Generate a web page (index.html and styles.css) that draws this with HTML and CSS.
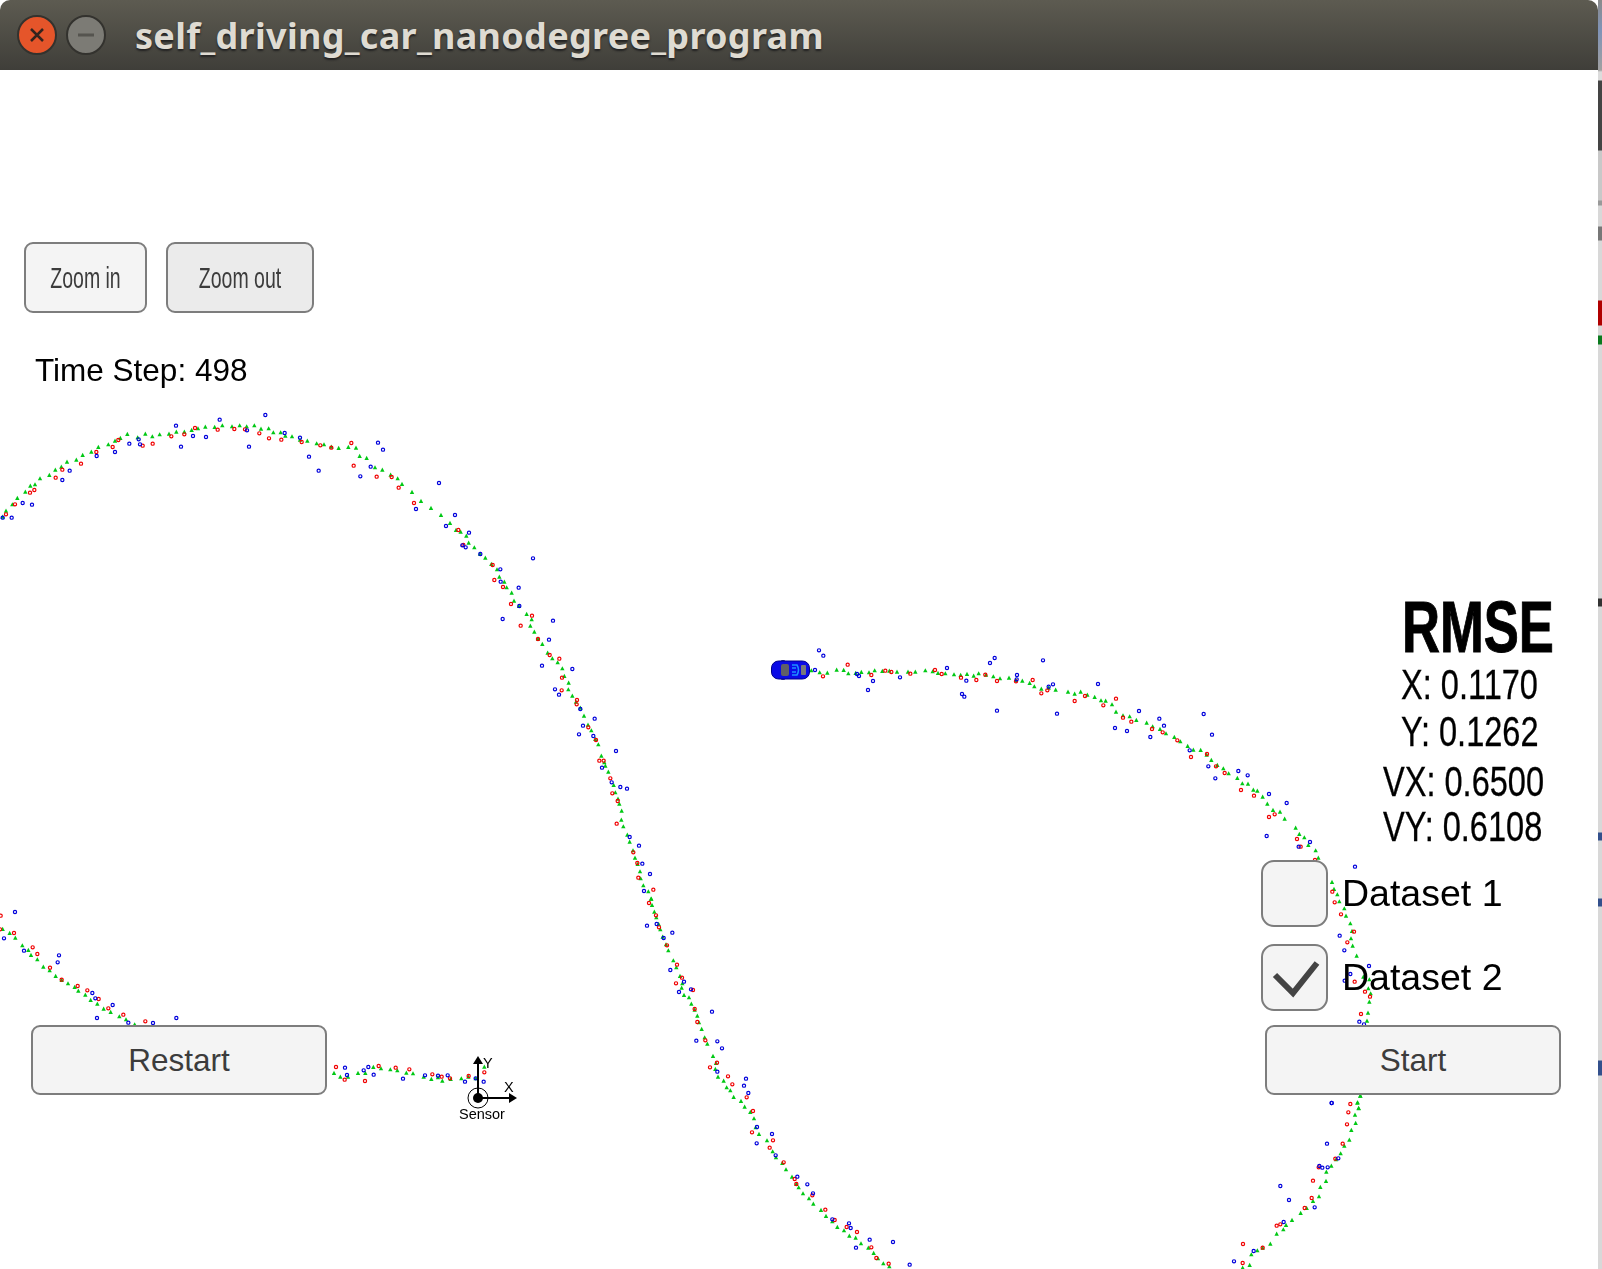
FILE: index.html
```html
<!DOCTYPE html>
<html lang="en">
<head>
    <meta charset="UTF-8">
    <title>self_driving_car_nanodegree_program</title>
    <link rel="stylesheet" href="styles.css">
</head>
<body>
    <div class="window">
        <div class="titlebar">
            <svg class="win-btn close" width="40" height="40" viewBox="0 0 40 40">
                <circle cx="20" cy="20" r="19" fill="#e5552a" stroke="#33322e" stroke-width="2"/>
                <path d="M14 14 L26 26 M26 14 L14 26" stroke="#33241e" stroke-width="2.5" fill="none"/>
            </svg>
            <svg class="win-btn" width="42" height="40" viewBox="0 0 42 40">
                <circle cx="21" cy="20" r="19" fill="#7c7b75" stroke="#33322e" stroke-width="2"/>
                <path d="M13 20 H29" stroke="#55544f" stroke-width="3" fill="none"/>
            </svg>
            <div class="title">self_driving_car_nanodegree_program</div>
        </div>

        <div class="sim">
            <canvas id="track" width="1598" height="1199"></canvas>

            <div class="zoom-controls">
                <button class="btn btn-zoom"><span>Zoom in</span></button>
                <button class="btn btn-zoom pressed"><span>Zoom out</span></button>
            </div>
            <div class="time-step">Time Step: 498</div>

            <svg class="car" width="40" height="20" viewBox="0 0 40 20">
                <rect x="10" y="0" width="4" height="20" rx="1" fill="#3a3a90"/>
                <rect x="0.5" y="1" width="38" height="18" rx="7" fill="#0a0ae6" stroke="#00008c"/>
                <rect x="10" y="4" width="8" height="12" rx="2" fill="#5f5f68"/>
                <path d="M21 5 H26 Q29 10 26 15 H21 M21 8 H25 M21 12 H25" stroke="#1e90ff" stroke-width="1.5" fill="none"/>
                <rect x="30" y="5" width="5" height="10" rx="1" fill="#77777c"/>
            </svg>

            <svg class="sensor" width="75" height="75" viewBox="0 0 75 75">
                <circle cx="27" cy="47" r="10" fill="#fff" stroke="#000" stroke-width="1"/>
                <circle cx="27" cy="47" r="5" fill="#000"/>
                <path d="M27 47 V12 M27 47 H60" stroke="#000" stroke-width="2" fill="none"/>
                <path d="M27 5 L32 13 H22 Z M66 47 L58 42 V52 Z" fill="#000"/>
                <text x="32" y="17">Y</text>
                <text x="53" y="41">X</text>
                <text x="8" y="68">Sensor</text>
            </svg>

            <div class="rmse">
                <div class="rmse-head">RMSE</div>
                <div class="rmse-row">X: 0.1170</div>
                <div class="rmse-row row-y">Y: 0.1262</div>
                <div class="rmse-row row-vx">VX: 0.6500</div>
                <div class="rmse-row row-vy">VY: 0.6108</div>
            </div>

            <div class="datasets">
                <div class="dataset">
                    <div class="checkbox"></div>
                    <span>Dataset 1</span>
                </div>
                <div class="dataset">
                    <div class="checkbox">
                        <svg width="63" height="63" viewBox="0 0 63 63">
                            <path d="M12 29 L30 47 L54 17" stroke="#444" stroke-width="6" fill="none"/>
                        </svg>
                    </div>
                    <span>Dataset 2</span>
                </div>
            </div>

            <button class="btn btn-wide restart">Restart</button>
            <button class="btn btn-wide start">Start</button>
        </div>
    </div>
    <div class="strip"></div>

    <script src="app.js"></script>
</body>
</html>
```

FILE: styles.css
```css
* {
    margin: 0;
    padding: 0;
    box-sizing: border-box;
}

body {
    width: 1602px;
    height: 1269px;
    display: flex;
    overflow: hidden;
    background: #fff;
    font-family: 'Liberation Sans', Arial, sans-serif;
    color: #000;
}

.window {
    flex: 1;
    display: flex;
    flex-direction: column;
}

.titlebar {
    height: 70px;
    display: flex;
    align-items: center;
    padding-left: 17px;
    gap: 8px;
    background: linear-gradient(#5d5b51, #3f3e39);
    border-radius: 10px 10px 0 0;
}

.win-btn {
    flex: none;
}

.title {
    margin-left: 20px;
    font-family: 'Noto Sans', sans-serif;
    font-weight: 700;
    font-size: 36px;
    letter-spacing: 0.3px;
    color: #dfdbd2;
    text-shadow: 0 2px 2px #222;
    white-space: nowrap;
}

.sim {
    position: relative;
    flex: 1;
    background: #fff;
}

#track {
    display: block;
}

.btn {
    font-family: inherit;
    color: #3c3c3c;
    background: #f4f4f4;
    border: 2px solid #7d7d7d;
    border-radius: 9px;
}

.zoom-controls {
    position: absolute;
    left: 24px;
    top: 172px;
    display: flex;
    gap: 19px;
}

.btn-zoom {
    width: 123px;
    height: 71px;
    font-size: 30px;
}

.btn-zoom span {
    display: block;
    transform: scaleX(0.65);
    white-space: nowrap;
}

.btn-zoom.pressed {
    width: 148px;
    background: #ebebeb;
}

.time-step {
    position: absolute;
    left: 35px;
    top: 282px;
    font-size: 31.5px;
}

.car {
    position: absolute;
    left: 771px;
    top: 590px;
}

.sensor {
    position: absolute;
    left: 451px;
    top: 981px;
    font-size: 14.5px;
}

.rmse {
    position: absolute;
    left: 1383px;
    top: 523px;
    display: flex;
    flex-direction: column;
    align-items: flex-start;
}

.rmse-head,
.rmse-row {
    transform-origin: left center;
    white-space: nowrap;
}

.rmse-head {
    margin-left: 19px;
    font-size: 72px;
    font-weight: bold;
    line-height: 68px;
    transform: scaleX(0.73);
    -webkit-text-stroke: 1px #000;
}

.rmse-row {
    margin-left: 18px;
    font-size: 42px;
    line-height: 47px;
    transform: scaleX(0.775);
    -webkit-text-stroke: 0.3px #000;
}

.row-vx {
    margin-left: 0;
    margin-top: 3px;
}

.row-vy {
    margin-left: 0;
    margin-top: -2px;
}

.datasets {
    position: absolute;
    left: 1261px;
    top: 790px;
    display: flex;
    flex-direction: column;
    gap: 17px;
}

.dataset {
    display: flex;
    align-items: center;
    gap: 14px;
    font-size: 37.5px;
}

.checkbox {
    width: 67px;
    height: 67px;
    background: #f4f4f4;
    border: 2px solid #7d7d7d;
    border-radius: 13px;
}

.checkbox svg {
    display: block;
}

.btn-wide {
    position: absolute;
    top: 955px;
    width: 296px;
    height: 70px;
    font-size: 31.5px;
}

.restart {
    left: 31px;
}

.start {
    left: 1265px;
}

.strip {
    width: 4px;
    background:
        linear-gradient(#8a8a8a 0, #7f93b8 30px, #a0a0a0 70px, #dcdcdc 72px, #dcdcdc 80px, #444 81px, #444 150px,
            #c8c8c8 151px, #c8c8c8 200px, #999 201px, #999 205px, #d8d8d8 206px, #d8d8d8 226px, #777 227px, #777 240px,
            #d8d8d8 241px, #d8d8d8 300px, #b00000 301px, #b00000 325px, #d8d8d8 326px, #d8d8d8 335px, #0a7a1e 336px,
            #0a7a1e 344px, #d8d8d8 345px, #d8d8d8 598px, #333 599px, #333 606px, #d8d8d8 607px, #d8d8d8 832px,
            #33508c 833px, #33508c 840px, #d8d8d8 841px, #d8d8d8 898px, #33508c 899px, #33508c 906px, #d8d8d8 907px,
            #d8d8d8 1060px, #33508c 1061px, #33508c 1075px, #d8d8d8 1076px);
}
```

FILE: app.js
```js
const canvas = document.getElementById('track');
const ctx = canvas.getContext('2d');

// marker positions read off the picture: each block has an origin and x,y pairs at 3x
const blocks = [
    { x: 0, y: 400,
      g: [8,350,18,332,37,313,52,294,76,275,91,257,105,253,120,235,148,225,166,209,184,200,201,185,229,179,248,165,274,155,295,141,325,133,345,122,361,114,382,102,413,112,436,101,457,109,479,103,507,101,529,95,553,95,575,90,594,85,616,80,644,81,667,76,696,79,719,76,740,79,763,76,783,86,806,85,820,97,842,97,856,107,876,109,900,119,922,122,950,130,972,133,994,140,1016,144,1045,141,1068,143,1079,168,1100,174,1125,202,1147,209,1172,224,1193,235,1206,252,1236,276,1263,303,1293,324,1323,345,1350,369],
      r: [18,343,45,313,90,278,103,270,167,233,187,209,243,191,289,156,338,141,355,120,428,137,458,131,514,109,553,103,585,84,653,89,703,87,735,88,778,100,807,115,844,119,905,126,961,136,994,143,1054,129,1061,197,1130,230,1175,231,1196,263,1242,309],
      b: [8,353,35,353,68,309,96,314,187,240,209,212,290,168,345,156,388,131,416,118,420,133,528,77,543,140,579,108,618,111,659,59,741,91,747,140,796,45,854,99,900,113,927,170,956,212,1134,128,1149,149,1112,200,1081,229,1317,249,1248,327,1365,345,1338,378] },
    { x: 400, y: 530,
      g: [168,0,182,5,199,17,206,38,223,52,240,71,256,83,274,102,291,118,298,140,313,155,320,172,335,188,342,212,357,228,380,252,395,268,391,287,403,305,414,326,427,342,443,368,457,385,473,397,487,415,493,438,506,458,505,478,517,497,528,515,541,533,552,557,564,584,574,601,586,627,595,643,604,677,613,697,616,707,625,725,641,765,646,787,654,806,658,821,665,842,664,869,670,889,682,914,689,935,699,961,705,983,713,1002,720,1024,722,1045,730,1066,745,1084,754,1106],
      r: [175,0,190,45,278,105,283,150,309,171,333,222,396,257,362,287,414,327,449,375,478,386,486,443,485,481,531,510,530,523,565,592,588,630,598,692,611,692,631,745,637,790,653,813,650,881,700,967,712,999,715,1043,760,1079],
      b: [207,8,187,46,197,52,241,72,399,85,301,118,302,155,356,173,358,228,308,267,459,272,447,329,426,407,517,417,465,478,477,494,541,537,584,566,549,587,537,613,580,618,648,663,606,713,635,757,661,771,681,776,689,921,717,947,727,1001,750,1032,732,1083] },
    { x: 620, y: 890,
      g: [93,26,96,45,103,65,109,82,116,102,121,118,128,140,138,163,145,181,160,211,169,232,180,258,187,280,185,293,192,315,207,322,214,341,224,359,232,377,237,397,245,417,254,442,262,461,279,498,288,519,286,537,294,560,311,572,320,592,331,601,341,621,363,633,374,650,391,666,402,685,407,712,417,732,441,751,458,784,468,802,487,819,498,838,516,860,529,882,536,892,549,910,567,925,580,941,603,960,618,978,637,994,652,1011,672,1021,688,1037,707,1043,723,1060,745,1073,761,1089,774,1105,790,1120,808,1129],
      r: [87,39,108,76,117,112,141,166,171,224,186,263,168,280,219,300,224,357,232,396,256,451,291,518,270,532,324,559,337,583,380,622,399,663,396,727,459,751,449,773,491,817,524,867,529,882,577,916,616,959,644,990,680,1011,711,1026,754,1072,769,1104,806,1121],
      b: [81,107,110,102,157,128,131,144,151,240,192,275,177,306,213,298,276,365,229,452,292,454,306,475,292,545,378,566,372,587,385,609,411,711,456,732,410,760,467,796,532,860,562,883,579,910,637,988,687,1000,692,1014,749,1049,708,1073,819,1056,869,1124] },
    { x: 740, y: 630,
      g: [214,121,239,127,262,128,290,119,311,120,325,130,347,129,364,126,387,127,404,121,427,123,448,122,471,125,504,125,526,125,556,121,578,124,594,129,616,130,642,133,662,135,681,132,701,137,716,130],
      r: [323,104,249,139,394,135,436,122,454,126,511,131,585,120,605,132,663,143,709,150],
      b: [225,120,237,61,250,77,351,132,357,138,399,153,384,180,480,142,621,114,679,152,666,192,673,200] },
    { x: 980, y: 640,
      g: [18,104,40,109,60,115,87,113,108,120,127,122,149,129,163,139,184,146,206,143,227,149,264,155,284,161,302,155,322,164,344,171,363,181,377,182,396,193,408,215,429,226,449,229,469,240,500,248,518,259,540,267,558,280,583,291,601,304,623,318,640,329,662,330,680,344,694,360,712,375,730,385,746,400,772,414,787,430,804,431,820,449,832,452,848,470,862,491,879,510,900,515,914,536,947,563,958,582,973,592,985,615,1007,631,1015,653],
      r: [16,104,51,123,108,124,158,120,184,160,202,151,284,183,315,168,370,196,408,176,429,233,454,245,516,267,548,277,592,301,633,351,681,342,708,379,734,399,783,450,822,467,867,531,884,523,951,597,962,620,1005,660],
      b: [30,69,44,54,111,105,110,118,189,61,219,133,206,140,354,132,51,212,231,221,477,213,405,264,441,273,538,236,552,257,511,291,671,222,696,284,629,331,685,379,706,415,775,393,803,406,867,462,920,489,860,588,990,606,956,620] },
    { x: 1240, y: 590,
      g: [276,876,282,897,292,913,298,934,313,955,318,977,331,1000,336,1023,333,1045,338,1067,350,1097,370,1160,388,1168,385,1195,392,1210,388,1235,384,1268,381,1292,361,1517,353,1537,356,1555],
      r: [277,905,284,937,303,973,342,1025,322,1057,344,1175,375,1205,390,1220,363,1272],
      b: [345,830,299,1037,313,1081,387,1128,331,1152,314,1172,358,1295,372,1303,275,1539] },
    { x: 1220, y: 1090,
      g: [421,17,412,38,416,54,405,74,407,99,394,120,388,149,373,167,362,190,348,208,334,227,319,245,318,273,301,291,297,319,279,333,260,354,242,369,216,390,198,405,190,418,170,431,151,461,128,473,112,481,94,493,89,525,68,533],
      r: [391,42,385,67,381,103,368,161,346,206,296,232,279,272,275,324,254,354,181,403,170,407,128,473,69,462,68,519],
      b: [335,39,321,161,355,205,298,228,307,233,323,232,181,288,207,330,284,352,191,396,101,483,42,514] },
    { x: 320, y: 1040,
      g: [42,99,61,110,84,110,114,99,136,99,160,81,183,85,211,88,232,91,259,98,279,100,311,110,334,117,354,112,367,122,392,117,424,115,445,110,467,115,493,80],
      r: [48,81,74,119,135,123,176,78,227,83,268,88,337,103,365,110,390,115,446,108,493,97],
      b: [75,83,81,105,131,91,145,81,161,104,249,116,315,106,354,107,383,106,435,125,467,115,491,125] },
    { x: 0, y: 890,
      g: [8,117,29,129,46,143,67,166,85,180,93,195,112,208,130,230,149,241,167,258,185,270,204,280,224,291,235,302,256,314,272,330,292,341,311,356,332,366,358,379,378,388,404,403],
      r: [2,77,0,118,42,129,98,172,112,192,150,233,185,269,233,288,262,301,296,327,325,355,370,374,436,394],
      b: [45,66,12,145,72,182,177,196,173,217,277,309,286,325,338,345,291,384,385,398,459,399,529,384] }
];

function triangle(x, y) {
    ctx.fillStyle = '#00c814';
    ctx.beginPath();
    ctx.moveTo(x, y - 2.2);
    ctx.lineTo(x + 2.2, y + 2);
    ctx.lineTo(x - 2.2, y + 2);
    ctx.closePath();
    ctx.fill();
}

function ring(x, y, color) {
    ctx.strokeStyle = color;
    ctx.lineWidth = 1.2;
    ctx.beginPath();
    ctx.arc(x, y, 1.6, 0, Math.PI * 2);
    ctx.stroke();
}

function each(block, list, fn) {
    for (let i = 0; i < list.length; i += 2) {
        fn(block.x + list[i] / 3, block.y - 70 + list[i + 1] / 3);
    }
}

blocks.forEach(b => each(b, b.g, triangle));
blocks.forEach(b => each(b, b.r, (x, y) => ring(x, y, '#f00000')));
blocks.forEach(b => each(b, b.b, (x, y) => ring(x, y, '#0000dc')));
```
